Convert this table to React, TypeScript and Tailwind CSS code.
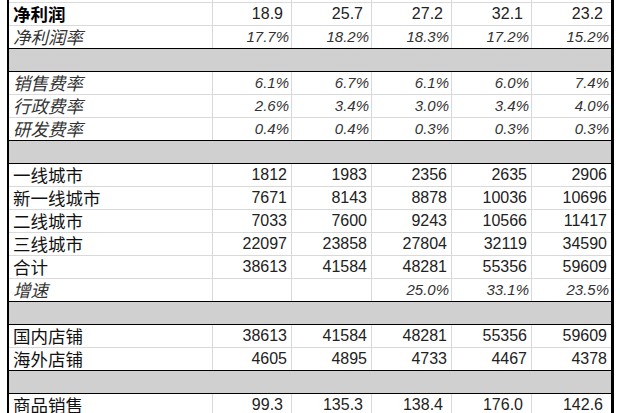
import React from "react";

type Row =
  | { kind: "gray" }
  | { kind: "data"; label: string; style: "bold" | "italic" | "normal"; values: string[]; fmt: "int" | "dec" | "pct" };

const rows: Row[] = [
  { kind: "data", label: "毛利润", style: "bold", values: ["", "", "", "", ""], fmt: "dec" },
  { kind: "data", label: "净利润", style: "bold", values: ["18.9", "25.7", "27.2", "32.1", "23.2"], fmt: "dec" },
  { kind: "data", label: "净利润率", style: "italic", values: ["17.7%", "18.2%", "18.3%", "17.2%", "15.2%"], fmt: "pct" },
  { kind: "gray" },
  { kind: "data", label: "销售费率", style: "italic", values: ["6.1%", "6.7%", "6.1%", "6.0%", "7.4%"], fmt: "pct" },
  { kind: "data", label: "行政费率", style: "italic", values: ["2.6%", "3.4%", "3.0%", "3.4%", "4.0%"], fmt: "pct" },
  { kind: "data", label: "研发费率", style: "italic", values: ["0.4%", "0.4%", "0.3%", "0.3%", "0.3%"], fmt: "pct" },
  { kind: "gray" },
  { kind: "data", label: "一线城市", style: "normal", values: ["1812", "1983", "2356", "2635", "2906"], fmt: "int" },
  { kind: "data", label: "新一线城市", style: "normal", values: ["7671", "8143", "8878", "10036", "10696"], fmt: "int" },
  { kind: "data", label: "二线城市", style: "normal", values: ["7033", "7600", "9243", "10566", "11417"], fmt: "int" },
  { kind: "data", label: "三线城市", style: "normal", values: ["22097", "23858", "27804", "32119", "34590"], fmt: "int" },
  { kind: "data", label: "合计", style: "normal", values: ["38613", "41584", "48281", "55356", "59609"], fmt: "int" },
  { kind: "data", label: "增速", style: "italic", values: ["", "", "25.0%", "33.1%", "23.5%"], fmt: "pct" },
  { kind: "gray" },
  { kind: "data", label: "国内店铺", style: "normal", values: ["38613", "41584", "48281", "55356", "59609"], fmt: "int" },
  { kind: "data", label: "海外店铺", style: "normal", values: ["4605", "4895", "4733", "4467", "4378"], fmt: "int" },
  { kind: "gray" },
  { kind: "data", label: "商品销售", style: "normal", values: ["99.3", "135.3", "138.4", "176.0", "142.6"], fmt: "dec" },
];

const colW = ["w-[79px]", "w-[80px]", "w-[80px]", "w-[80px]", "w-[79px]"];

export default function App() {
  return (
    <div className="w-[620px] h-[413px] overflow-hidden bg-white">
      <div className="-mt-[20px] ml-[7px] w-[607px] border-l-2 border-r-[3px] border-black">
        {rows.map((r, i) => {
          const next = rows[i + 1];
          const blackBottom = r.kind === "gray" || (next && next.kind === "gray");
          const bb = blackBottom ? "border-b border-black" : "border-b border-[#d9d9d9]";
          if (r.kind === "gray") {
            return <div key={i} className={`h-[23px] bg-[#d0d0d0] ${bb}`} />;
          }
          const labelCls =
            r.style === "bold"
              ? "font-bold text-black"
              : r.style === "italic"
              ? "italic text-[#333]"
              : "text-[#111]";
          const pr = r.fmt === "int" ? "pr-[4px]" : r.fmt === "dec" ? "pr-[8px]" : "pr-[2px]";
          const numCls = r.fmt === "pct" ? "italic text-[15px] text-[#333]" : "text-[16px] text-[#222]";
          return (
            <div key={i} className={`flex h-[23px] ${bb}`}>
              <div
                className={`w-[204px] border-r border-[#d9d9d9] pl-[4px] text-[17.5px] leading-[22px] ${labelCls}`}
                style={{ fontFamily: '"Noto Sans CJK SC", sans-serif' }}
              >
                {r.label}
              </div>
              {r.values.map((v, j) => (
                <div
                  key={j}
                  className={`${colW[j]} ${j < 4 ? "border-r border-[#d9d9d9]" : ""} flex items-end justify-end pb-[1px] leading-[20px] ${pr} ${numCls}`}
                  style={{ fontFamily: '"Liberation Sans", Arial, sans-serif' }}
                >
                  {v}
                </div>
              ))}
            </div>
          );
        })}
      </div>
    </div>
  );
}
